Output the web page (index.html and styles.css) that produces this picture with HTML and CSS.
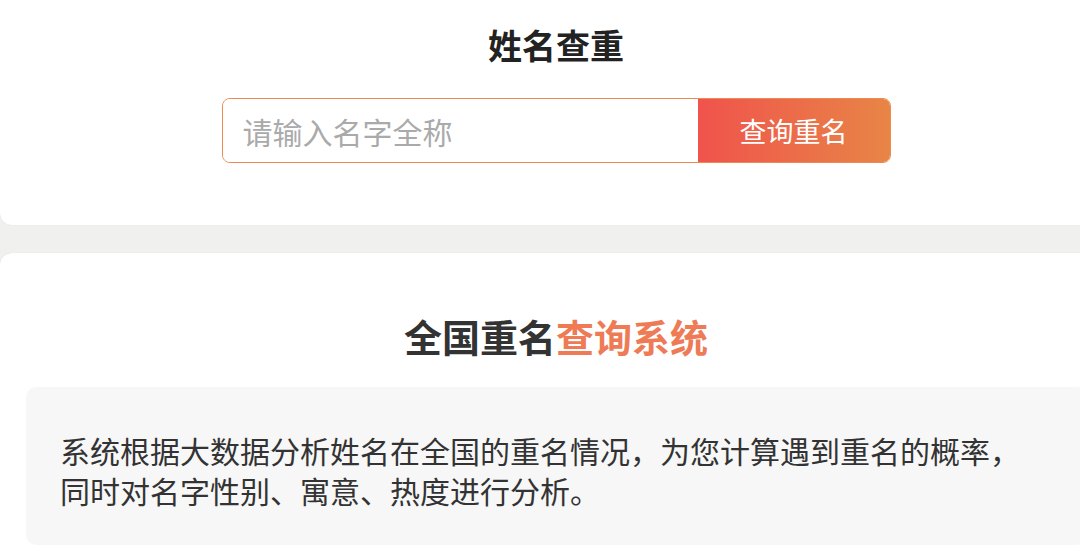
FILE: index.html
```html
<!DOCTYPE html>
<html lang="zh-CN">
<head>
    <meta charset="UTF-8">
    <meta name="viewport" content="width=device-width, initial-scale=1.0">
    <title>姓名查重</title>
    <link rel="stylesheet" href="styles.css">
</head>
<body>
    <div class="page">
        <div class="card search-card">
            <h1>姓名查重</h1>
            <form class="search-form" onsubmit="return false;">
                <input type="text" id="fullName" placeholder="请输入名字全称">
                <button type="submit">查询重名</button>
            </form>
        </div>

        <div class="card intro-card">
            <h2>全国重名<span class="hl">查询系统</span></h2>
            <div class="intro-box">
                <p>系统根据大数据分析姓名在全国的重名情况，为您计算遇到重名的概率，同时对名字性别、寓意、热度进行分析。</p>
            </div>
        </div>
    </div>
</body>
</html>
```

FILE: styles.css
```css
html, body {
    margin: 0;
    padding: 0;
    overflow: hidden;
}
body {
    background: #f0f0ef;
    font-family: "Noto Sans CJK SC", "Noto Sans", sans-serif;
    color: #333;
}
.page {
    width: 1112px;
}
.card {
    background: #fff;
    border-radius: 12px;
    box-shadow: 0 0 1px rgba(0, 0, 0, 0.12);
}
.search-card {
    border-radius: 0 0 12px 12px;
    padding: 22px 0 62px;
    display: flex;
    flex-direction: column;
    align-items: center;
}
h1 {
    margin: 0;
    font-size: 34px;
    line-height: 46px;
    font-weight: bold;
    color: #222;
}
.search-form {
    margin-top: 30px;
    display: flex;
    width: 669px;
    height: 65px;
    border: 1px solid #ec8a50;
    border-radius: 8px;
    overflow: hidden;
    box-sizing: border-box;
}
.search-form input {
    flex: 1;
    border: none;
    outline: none;
    padding: 0 20px;
    font-family: inherit;
    font-size: 30px;
    color: #333;
}
.search-form input::placeholder {
    color: #aaa;
}
.search-form button {
    width: 192px;
    border: none;
    background: linear-gradient(90deg, #f0534c, #e88546);
    color: #fff;
    font-family: inherit;
    font-size: 27px;
    cursor: pointer;
}
.intro-card {
    margin-top: 28px;
    padding: 58px 26px 40px;
}
h2 {
    margin: 0;
    text-align: center;
    font-size: 38px;
    line-height: 50px;
    font-weight: bold;
    color: #333;
}
h2 .hl {
    color: #ee7b56;
}
.intro-box {
    margin-top: 26px;
    background: #f7f7f7;
    border-radius: 10px;
    padding: 43px 40px 35px 34px;
}
.intro-box p {
    margin: 0;
    font-size: 30px;
    line-height: 40px;
    color: #333;
}
```
